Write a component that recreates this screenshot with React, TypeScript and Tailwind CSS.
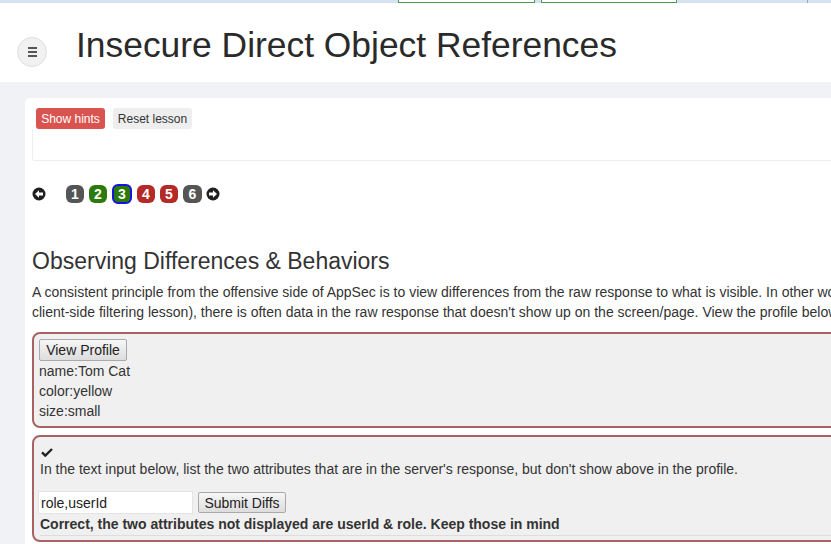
import React from 'react'

const font = { fontFamily: '"Liberation Sans", Arial, sans-serif' }

function ArrowCircle({ dir }: { dir: 'left' | 'right' }) {
  return (
    <svg width="14" height="14" viewBox="0 0 14 14" className="shrink-0">
      <circle cx="7" cy="7" r="6.5" fill="#1f1f1f" />
      {dir === 'left' ? (
        <path d="M3 7 L7 3.2 L7 5.6 L11 5.6 L11 8.4 L7 8.4 L7 10.8 Z" fill="#fff" />
      ) : (
        <path d="M11 7 L7 3.2 L7 5.6 L3 5.6 L3 8.4 L7 8.4 L7 10.8 Z" fill="#fff" />
      )}
    </svg>
  )
}

const pages = [
  { n: 1, cls: 'bg-[#555555] w-[18px] h-[18px]' },
  { n: 2, cls: 'bg-[#2b7a0b] w-[18px] h-[18px]' },
  { n: 3, cls: 'bg-[#2b7a0b] border-2 border-[#1515e0] w-[20px] h-[20px]' },
  { n: 4, cls: 'bg-[#b52a26] w-[18px] h-[18px]' },
  { n: 5, cls: 'bg-[#b52a26] w-[18px] h-[18px]' },
  { n: 6, cls: 'bg-[#555555] w-[19px] h-[18px]' },
]

export default function App() {
  return (
    <div className="w-[831px] h-[544px] overflow-hidden bg-[#f0f2f5] text-[#333333]" style={font}>
      {/* browser strip */}
      <div className="h-[3px] bg-[#d6e2f1] flex">
        <div className="ml-[398px] w-[137px] h-[3px] border-x border-b border-[#4d9a55] bg-white" />
        <div className="ml-[6px] w-[136px] h-[3px] border-x border-b border-[#4d9a55] bg-white" />
        <div className="ml-[130px] w-px h-[3px] bg-[#9aa]" />
      </div>

      {/* header */}
      <div className="h-[79px] bg-white flex items-start">
        <div className="ml-[17px] mt-[34px] w-[30px] h-[30px] rounded-full bg-[#f1f1f1] border border-[#dddddd] flex flex-col items-center justify-center gap-[2px]">
          <span className="block w-[9px] h-[2px] bg-[#555]" />
          <span className="block w-[9px] h-[2px] bg-[#555]" />
          <span className="block w-[9px] h-[2px] bg-[#555]" />
        </div>
        <h1 className="ml-[29px] mt-[22px] text-[35.4px] leading-[40px] text-[#2a2a2a] whitespace-nowrap">
          Insecure Direct Object References
        </h1>
      </div>

      {/* content */}
      <div className="pl-[25px] pt-[16px]">
        <div className="w-[1000px] bg-white rounded-tl-[5px] pt-[10px] pb-[20px]">
          <div className="flex gap-[8px] pl-[11px]">
            <button className="h-[21px] w-[69px] rounded-[3px] bg-[#d9534f] text-white text-[12px]">Show hints</button>
            <button className="h-[21px] w-[79px] rounded-[3px] bg-[#eeeeee] text-[#333] text-[12px]">Reset lesson</button>
          </div>
          <div className="ml-[7px] h-[32px] border border-t-0 border-[#eeeeee] rounded-b-[3px]" />

          {/* pagination */}
          <div className="flex items-center mt-[23px] pl-[7px] h-[20px]">
            <ArrowCircle dir="left" />
            <div className="flex items-center gap-[5px] ml-[20px]">
              {pages.map((p) => (
                <div
                  key={p.n}
                  className={`${p.cls} box-border rounded-[6px] text-white text-[14px] font-bold flex items-center justify-center`}
                >
                  {p.n}
                </div>
              ))}
            </div>
            <div className="ml-[4px]">
              <ArrowCircle dir="right" />
            </div>
          </div>

          <div className="pl-[7px]">
            <h3 className="mt-[44px] text-[23px] leading-[26px] text-[#333]">Observing Differences &amp; Behaviors</h3>
            <div className="mt-[8px] text-[14px] leading-[20px]">
              <p className="whitespace-nowrap">
                A consistent principle from the offensive side of AppSec is to view differences from the raw response to what is visible. In other words (like the
              </p>
              <p className="whitespace-nowrap">
                client-side filtering lesson), there is often data in the raw response that doesn't show up on the screen/page. View the profile below and take note of the differences.
              </p>
            </div>

            <div className="mt-[10px] h-[96px] border-2 border-[#a86262] rounded-[8px] bg-[#f0f0f0] pl-[5px] pt-[5px] text-[14px] leading-[20px]">
              <button className="h-[22px] w-[88px] rounded-[2px] border border-[#a9a9a9] bg-gradient-to-b from-[#f6f6f6] to-[#dddddd] text-[14px] text-[#222]">
                View Profile
              </button>
              <div>name:Tom Cat</div>
              <div>color:yellow</div>
              <div>size:small</div>
            </div>

            <div className="mt-[7px] h-[107px] border-2 border-[#a86262] rounded-[8px] bg-[#f0f0f0] pl-[6px] pt-[11px] text-[14px] leading-[20px]">
              <svg width="12" height="9" viewBox="0 0 12 9" className="block ml-[1px]">
                <path d="M1 4.4 L4.3 7.6 L11 1" stroke="#222" strokeWidth="2.4" fill="none" />
              </svg>
              <div className="mt-[2px]">
                In the text input below, list the two attributes that are in the server's response, but don't show above in the profile.
              </div>
              <div className="flex items-center gap-[5px] mt-[12px] -ml-[2px]">
                <input
                  readOnly
                  value="role,userId"
                  className="h-[23px] w-[155px] border border-[#e4e4e4] bg-white px-[2px] text-[14px] text-[#222] outline-none"
                />
                <button className="h-[21px] w-[88px] rounded-[2px] border border-[#a9a9a9] bg-gradient-to-b from-[#f6f6f6] to-[#dddddd] text-[14px] text-[#222]">
                  Submit Diffs
                </button>
              </div>
              <div className="font-bold">Correct, the two attributes not displayed are userId &amp; role. Keep those in mind</div>
              <div className="mt-[1px] border-t border-[#dddddd]" />
            </div>
          </div>
        </div>
      </div>
    </div>
  )
}
